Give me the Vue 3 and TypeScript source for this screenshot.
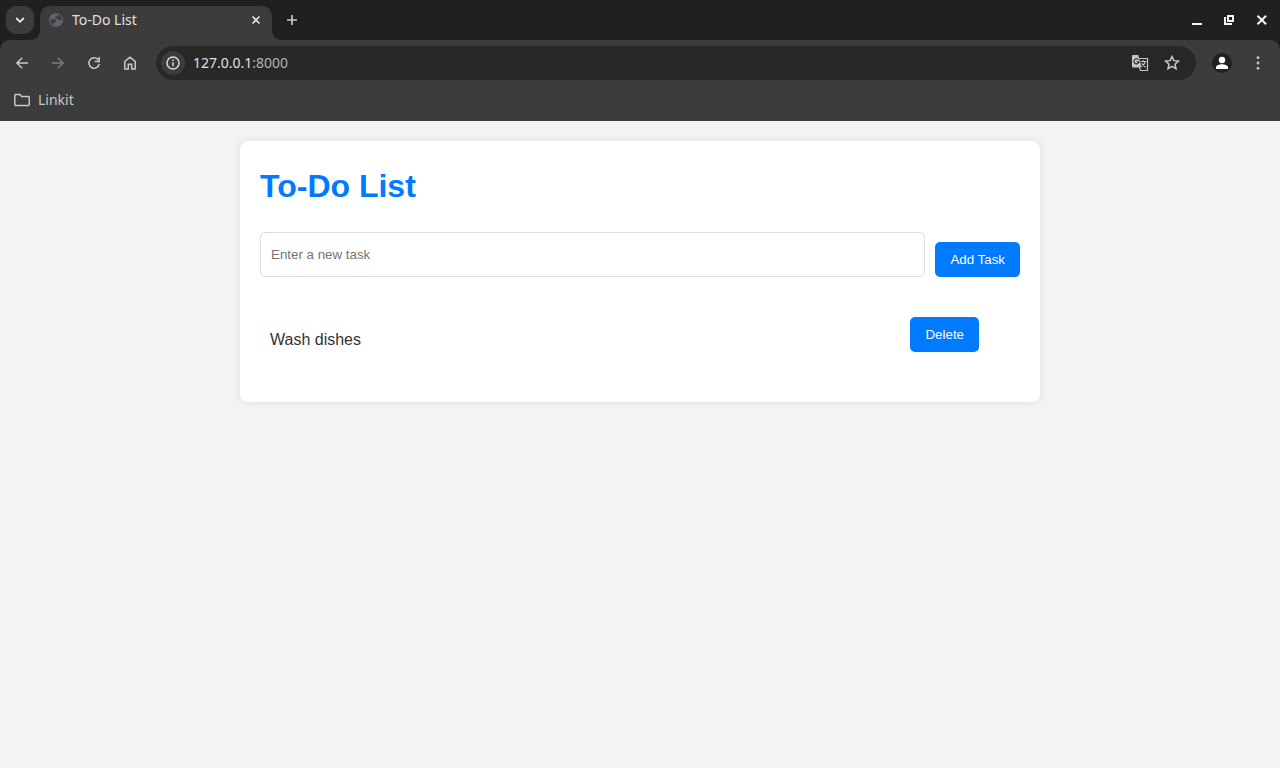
<script setup lang="ts">
import { ref } from 'vue'

interface Task {
  id: number
  title: string
}

const tasks = ref<Task[]>([{ id: 1, title: 'Wash dishes' }])
const draft = ref('')
let nextId = 2

function addTask(): void {
  const title = draft.value.trim()
  if (!title) return
  tasks.value.push({ id: nextId++, title })
  draft.value = ''
}

function removeTask(id: number): void {
  tasks.value = tasks.value.filter((task) => task.id !== id)
}
</script>

<template>
  <div class="browser">
    <header>
      <div class="tab-strip">
        <button class="tab-search" type="button" aria-label="Search tabs">
          <svg width="16" height="16" viewBox="0 0 16 16"><path d="M4.200 6 8 9.800 11.800 6" fill="none" stroke="currentColor" stroke-width="1.800" /></svg>
        </button>
        <div class="tab">
          <svg width="16" height="16" viewBox="0 0 16 16">
            <circle cx="8" cy="8" r="7" fill="#5f6468" />
            <path d="M2.300 7.200h3.900c1.700 0 2.500.8 2.500 2.100H7.200v1.700H5.400v2.300C3.200 12.200 2 10 2.300 7.200ZM9.600 2.300c2.300.7 4 2.600 4.300 4.900-.4.900-1.200 1.200-2 1.200-1 0-1.600-.8-1.600-1.600H7.400V4.700h1.400c.6 0 .8-.5.800-1Z" fill="#3c3c3c" />
          </svg>
          <span class="tab-title">To-Do List</span>
          <button class="plain small" type="button" aria-label="Close tab">
            <svg width="16" height="16" viewBox="0 0 16 16"><path d="m4.500 4.500 7 7m0-7-7 7" stroke="currentColor" stroke-width="1.600" /></svg>
          </button>
        </div>
        <button class="plain new-tab" type="button" aria-label="New tab">
          <svg width="16" height="16" viewBox="0 0 16 16"><path d="M8 3v10M3 8h10" stroke="currentColor" stroke-width="1.700" /></svg>
        </button>
        <div class="window-controls">
          <button class="plain small" type="button" aria-label="Minimize">
            <svg width="16" height="16" viewBox="0 0 16 16"><path d="M2 12h10" stroke="currentColor" stroke-width="2" /></svg>
          </button>
          <button class="plain small" type="button" aria-label="Restore">
            <svg width="16" height="16" viewBox="0 0 16 16" fill="none" stroke="currentColor" stroke-width="2"><path d="M6 4h5v5H6ZM3 5v7h7" /></svg>
          </button>
          <button class="plain small" type="button" aria-label="Close window">
            <svg width="16" height="16" viewBox="0 0 16 16"><path d="m3.500 3.700 8.600 8.600m0-8.600-8.600 8.600" stroke="currentColor" stroke-width="2" /></svg>
          </button>
        </div>
      </div>

      <div class="chrome">
        <div class="toolbar">
          <nav class="nav-buttons" aria-label="Navigation">
            <button class="plain small" type="button" aria-label="Back">
              <svg width="16" height="16" viewBox="0 0 16 16" fill="none" stroke="currentColor" stroke-width="1.500"><path d="M14 8H3M8.200 2.700 2.900 8l5.300 5.300" /></svg>
            </button>
            <button class="plain small" type="button" aria-label="Forward" disabled>
              <svg width="16" height="16" viewBox="0 0 16 16" fill="none" stroke="currentColor" stroke-width="1.500"><path d="M2 8h11M7.800 2.700 13.100 8l-5.300 5.300" /></svg>
            </button>
            <button class="plain small" type="button" aria-label="Reload">
              <svg width="16" height="16" viewBox="0 0 16 16"><path d="M12.300 5A5.200 5.200 0 1 0 13.200 9" fill="none" stroke="currentColor" stroke-width="1.500" /><path d="M12.300 2h1.600v5.200H8.700V5.700h3.600Z" fill="currentColor" /></svg>
            </button>
            <button class="plain small" type="button" aria-label="Home">
              <svg width="16" height="16" viewBox="0 0 16 16"><path d="M2.800 14V6.400L8 2.200l5.200 4.200V14H9.700V9.300H6.300V14Z" fill="none" stroke="currentColor" stroke-width="1.500" /></svg>
            </button>
          </nav>
          <div class="address">
            <button class="site-info" type="button" aria-label="View site information">
              <svg width="16" height="16" viewBox="0 0 16 16"><circle cx="8" cy="8" r="6" fill="none" stroke="currentColor" stroke-width="1.500" /><path d="M8 7.200v4M8 4.600v1.500" stroke="currentColor" stroke-width="1.500" /></svg>
            </button>
            <span class="url">127.0.0.1<span class="port">:8000</span></span>
            <button class="plain translate" type="button" aria-label="Translate this page">
              <svg width="18" height="18" viewBox="0 0 18 18">
                <path d="M2 1h5.200l3.500 12.500H2a1 1 0 0 1-1-1V2a1 1 0 0 1 1-1Z" fill="currentColor" />
                <path d="M7.500 5.600A2.600 2.600 0 1 0 8.100 7.700H5.600" fill="none" stroke="#282828" stroke-width="1.100" />
                <path d="M8.200 4.500h8.300v12H9.800l-1.500-3" fill="none" stroke="currentColor" stroke-width="1.200" />
                <path d="M9.500 7.500h5.800M12.300 6.200v1.300M14.200 7.700c-.4 2.100-1.800 3.600-3.500 4.700M10.900 9.200c.7 1.700 2 3 3.900 4.100" fill="none" stroke="currentColor" stroke-width="1.100" />
              </svg>
            </button>
            <button class="plain small" type="button" aria-label="Bookmark this tab">
              <svg width="18" height="18" viewBox="0 0 18 18"><path d="m9 2.500 1.850 4.150 4.550.45-3.400 3.050 1 4.500L9 12.300l-4 2.350 1-4.500L2.600 7.100l4.550-.45Z" fill="none" stroke="currentColor" stroke-width="1.500" /></svg>
            </button>
          </div>
          <button class="profile" type="button" aria-label="Profile">
            <svg width="20" height="20" viewBox="0 0 20 20" fill="currentColor"><circle cx="10" cy="7" r="3.200" /><path d="M4 16v-1.700c0-2.200 3.500-3.100 6-3.100s6 .9 6 3.100V16Z" /></svg>
          </button>
          <button class="plain small" type="button" aria-label="Menu">
            <svg width="16" height="16" viewBox="0 0 16 16" fill="currentColor"><circle cx="8" cy="2.700" r="1.400" /><circle cx="8" cy="8" r="1.400" /><circle cx="8" cy="13.300" r="1.400" /></svg>
          </button>
        </div>
        <div class="bookmarks">
          <a class="bookmark" href="#">
            <svg width="16" height="16" viewBox="0 0 16 16"><path d="M.8 12.800V3.300q0-.7.700-.7h4.400l1.700 1.900h6.900q.7 0 .7.700v7.600q0 .7-.7.700h-13q-.7 0-.7-.7Z" fill="none" stroke="currentColor" stroke-width="1.500" /></svg>
            <span>Linkit</span>
          </a>
        </div>
      </div>
    </header>

    <main class="page">
      <section class="card">
        <h1>To-Do List</h1>
        <form class="task-form" @submit.prevent="addTask">
          <input v-model="draft" type="text" placeholder="Enter a new task" aria-label="Enter a new task" />
          <button class="primary" type="submit">Add Task</button>
        </form>
        <ul class="tasks">
          <li v-for="task in tasks" :key="task.id">
            <span class="task-title">{{ task.title }}</span>
            <button class="primary" type="button" @click="removeTask(task.id)">Delete</button>
          </li>
        </ul>
      </section>
    </main>
  </div>
</template>

<style>
body {
  margin: 0;
  background: #f4f4f4;
}
</style>

<style scoped>
* {
  box-sizing: border-box;
}
.browser {
  display: flex;
  flex-direction: column;
  min-height: 100vh;
}
svg {
  display: block;
  flex: none;
}
header {
  background: #1f2120;
  color: #e0e0e0;
  font: 14px/20px "Noto Sans", "Open Sans", sans-serif;
}
button {
  border: 0;
  padding: 0;
  font-family: inherit;
  cursor: pointer;
}
.plain {
  display: flex;
  align-items: center;
  justify-content: center;
  background: none;
  color: #c7c7c7;
}
.small {
  width: 16px;
  height: 16px;
}
.plain:disabled {
  color: #7c7c7c;
}
.tab-strip {
  display: flex;
  height: 40px;
  padding: 6px 10px 0 6px;
}
.tab-search {
  display: grid;
  place-items: center;
  width: 28px;
  height: 28px;
  border-radius: 10px;
  background: #3c3c3c;
  color: #e8e8e8;
}
.tab {
  position: relative;
  display: flex;
  align-items: center;
  gap: 8px;
  width: 232px;
  margin-left: 6px;
  padding: 0 8px 6px;
  border-radius: 10px 10px 0 0;
  background: #3c3c3c;
}
.tab::before,
.tab::after {
  content: "";
  position: absolute;
  bottom: 0;
  width: 10px;
  height: 10px;
}
.tab::before {
  right: 100%;
  background: radial-gradient(circle at 0 0, transparent 10px, #3c3c3c 10px);
}
.tab::after {
  left: 100%;
  background: radial-gradient(circle at 100% 0, transparent 10px, #3c3c3c 10px);
}
.tab-title {
  flex: 1;
}
.tab .plain {
  color: #e3e3e3;
}
.new-tab {
  width: 28px;
  height: 28px;
  margin-left: 6px;
}
.window-controls {
  display: flex;
  gap: 16px;
  margin: 6px 0 0 auto;
}
.window-controls .plain {
  color: #f4f4f4;
}
.chrome {
  height: 81px;
  border-radius: 10px 10px 0 0;
  background: #3c3c3c;
}
.toolbar {
  display: flex;
  align-items: center;
  padding: 6px 14px 0;
}
.nav-buttons {
  display: flex;
  gap: 20px;
}
.address {
  display: flex;
  flex: 1;
  align-items: center;
  height: 34px;
  margin: 0 16px 0 18px;
  padding: 0 16px 0 5px;
  border-radius: 17px;
  background: #282828;
}
.site-info {
  display: grid;
  place-items: center;
  width: 24px;
  height: 24px;
  border-radius: 50%;
  background: #3c3c3c;
  color: #d8d8d8;
}
.url {
  flex: 1;
  margin-left: 8px;
}
.port {
  color: #b4b4b4;
}
.translate {
  width: 18px;
  height: 18px;
  margin-right: 15px;
}
.profile {
  display: grid;
  place-items: center;
  width: 20px;
  height: 20px;
  margin-right: 18px;
  border-radius: 50%;
  background: #1f2120;
  color: #fff;
}
.bookmarks {
  display: flex;
  padding: 10px 14px 0;
}
.bookmark {
  display: flex;
  align-items: center;
  gap: 8px;
  color: #c7c7c7;
  text-decoration: none;
}
.page {
  flex: 1;
  padding: 20px;
  background: #f4f4f4;
  color: #333;
  font: 16px/24px "Liberation Sans", Arial, sans-serif;
}
.card {
  max-width: 800px;
  margin: 0 auto;
  padding: 20px;
  border-radius: 8px;
  background: #fff;
  box-shadow: 0 0 10px rgba(0, 0, 0, 0.1);
}
h1 {
  margin: 0 0 21px;
  color: #007bff;
  font-size: 32px;
  line-height: 50px;
}
.task-form {
  display: flex;
  align-items: flex-end;
  gap: 10px;
}
input {
  flex: 1;
  min-width: 0;
  height: 45px;
  padding: 10px;
  border: 1px solid #ddd;
  border-radius: 5px;
  background: #fff;
  color: #333;
  font-family: inherit;
}
input::placeholder {
  color: #757575;
}
.primary {
  height: 35px;
  padding: 10px 15px;
  border-radius: 5px;
  background: #007bff;
  color: #fff;
  line-height: 15px;
}
.tasks {
  margin: 30px 0 20px;
  padding: 0;
  list-style: none;
}
li {
  display: flex;
  align-items: flex-start;
  justify-content: space-between;
  padding: 10px 41px 10px 10px;
}
.task-title {
  padding-top: 11px;
}
</style>
